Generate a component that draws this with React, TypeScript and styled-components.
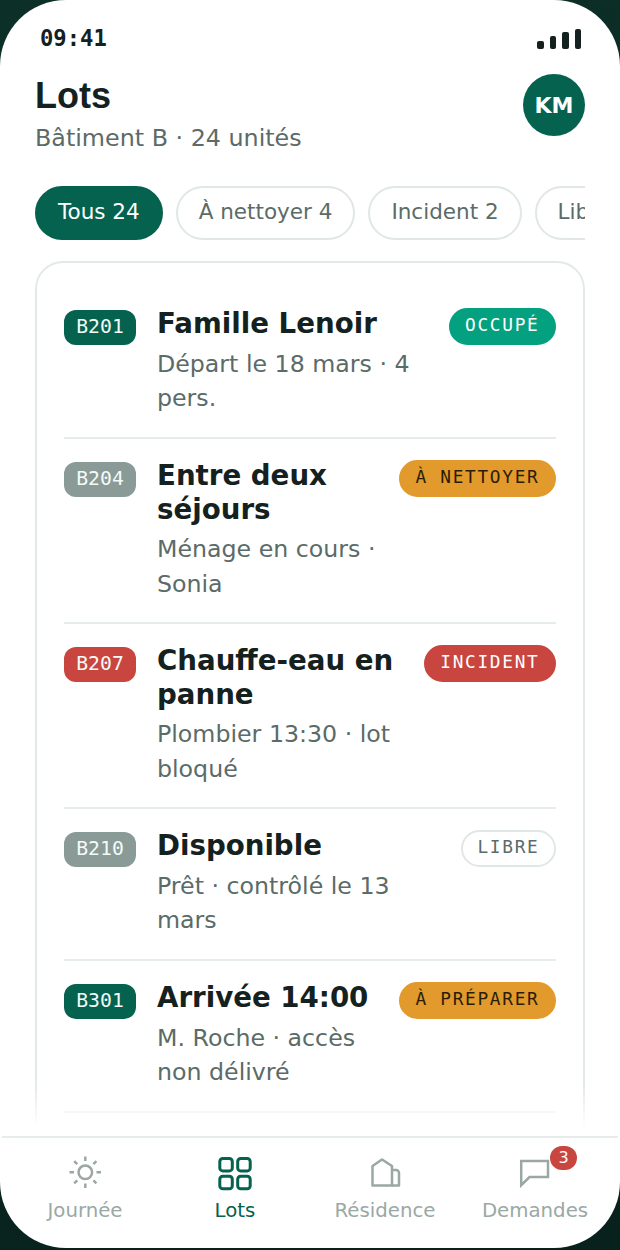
import React from "react";
import styled, { createGlobalStyle } from "styled-components";

const GlobalStyle = createGlobalStyle`
    html, body {
        margin: 0;
        padding: 0;
        background: #0a2620;
    }
`;

const sans = `"DejaVu Sans", sans-serif`;
const mono = `"DejaVu Sans Mono", monospace`;

const Backdrop = styled.div`
    width: 620px;
    height: 1250px;
    background: linear-gradient(160deg, #0c3028, #08211c);
    overflow: hidden;
`;

const Phone = styled.div`
    width: 620px;
    height: 1248px;
    background: #fff;
    border-radius: 66px;
    overflow: hidden;
    display: flex;
    flex-direction: column;
    font-family: ${sans};
`;

const StatusBar = styled.div`
    height: 74px;
    flex: none;
    box-sizing: border-box;
    padding: 23px 39px 0 40px;
    display: flex;
    justify-content: space-between;
    align-items: flex-start;
`;

const Time = styled.span`
    font-family: ${mono};
    font-weight: 700;
    font-size: 22.2px;
    line-height: 30px;
    color: #14211e;
`;

const Signal = styled.div`
    display: flex;
    align-items: flex-end;
    gap: 6px;
    height: 20px;
    margin-top: 6px;
`;

const SignalBar = styled.i<{ $h: number }>`
    display: block;
    width: 6.5px;
    height: ${(p) => p.$h}px;
    border-radius: 2px;
    background: #14211e;
`;

const Header = styled.header`
    flex: none;
    display: flex;
    justify-content: space-between;
    align-items: flex-start;
    padding: 0 35px;
`;

const Title = styled.h1`
    margin: 1px 0 0;
    font-family: "Liberation Sans", Arial, sans-serif;
    font-weight: 700;
    font-size: 36px;
    line-height: 42px;
    color: #14211e;
`;

const Subtitle = styled.div`
    margin-top: 3px;
    font-size: 23.8px;
    line-height: 36px;
    color: #5b6b67;
`;

const Avatar = styled.div`
    width: 62px;
    height: 62px;
    border-radius: 50%;
    background: #04624f;
    color: #fff;
    font-weight: 700;
    font-size: 22px;
    display: flex;
    align-items: center;
    justify-content: center;
`;

const Chips = styled.div`
    flex: none;
    display: flex;
    gap: 13px;
    margin: 30px 35px 0;
    overflow: hidden;
`;

const Chip = styled.div<{ $active?: boolean }>`
    flex: none;
    box-sizing: border-box;
    height: 54px;
    padding: 0 21px 3px;
    display: flex;
    align-items: center;
    border-radius: 27px;
    font-size: 21.5px;
    border: 2px solid ${(p) => (p.$active ? "#04624f" : "#e0e7e5")};
    background: ${(p) => (p.$active ? "#04624f" : "#fff")};
    color: ${(p) => (p.$active ? "#fff" : "#5b6b67")};
`;

const Scroll = styled.div`
    position: relative;
    flex: 1;
    min-height: 0;
    overflow: hidden;
    padding: 21px 35px 0;
`;

const Fade = styled.div`
    position: absolute;
    left: 0;
    right: 0;
    bottom: 0;
    height: 52px;
    background: linear-gradient(to bottom, rgba(255, 255, 255, 0), #fff 85%);
`;

const Card = styled.div`
    border: 2px solid #e3e9e7;
    border-radius: 28px;
    padding: 24.4px 27px 60px;
`;

const Row = styled.div`
    display: flex;
    align-items: flex-start;
    gap: 21px;
    padding: 20px 0 21px;
    border-bottom: 2px solid #e6ecea;
`;

const codeColors = {
    green: "#04624f",
    grey: "#8a9a96",
    red: "#c9453f",
};

const Code = styled.div<{ $tone: keyof typeof codeColors }>`
    flex: none;
    box-sizing: border-box;
    width: 72px;
    height: 35px;
    margin-top: 3px;
    padding-bottom: 2px;
    border-radius: 12px;
    background: ${(p) => codeColors[p.$tone]};
    color: #f2fbf8;
    font-family: ${mono};
    font-size: 19.76px;
    display: flex;
    align-items: center;
    justify-content: center;
`;

const Body = styled.div`
    flex: 1;
    min-width: 0;
`;

const RowTitle = styled.div`
    font-weight: 700;
    font-size: 27.66px;
    line-height: 33.6px;
    color: #14211e;
`;

const RowSub = styled.div`
    margin-top: 6px;
    font-size: 23.7px;
    line-height: 34.5px;
    color: #5b6b67;
`;

const pillTones = {
    occupied: { bg: "#04a181", fg: "#fff", border: "#04a181" },
    clean: { bg: "#e29a2d", fg: "#2b1d05", border: "#e29a2d" },
    incident: { bg: "#c9453f", fg: "#fff", border: "#c9453f" },
    free: { bg: "#fff", fg: "#5b6b67", border: "#e0e7e5" },
};

const Pill = styled.div<{ $tone: keyof typeof pillTones }>`
    flex: none;
    box-sizing: border-box;
    height: 37px;
    margin-top: 1px;
    padding: 0 14.5px 4px;
    border-radius: 19px;
    font-family: ${mono};
    font-size: 17.8px;
    letter-spacing: 1.7px;
    display: flex;
    align-items: center;
    background: ${(p) => pillTones[p.$tone].bg};
    color: ${(p) => pillTones[p.$tone].fg};
    border: 2px solid ${(p) => pillTones[p.$tone].border};
`;

const Nav = styled.nav`
    flex: none;
    box-sizing: border-box;
    height: 112px;
    margin: 0 2px;
    padding: 0 8px;
    border-top: 2px solid #e6ecea;
    display: grid;
    grid-template-columns: repeat(4, 1fr);
`;

const NavItem = styled.div<{ $active?: boolean }>`
    display: flex;
    flex-direction: column;
    align-items: center;
    padding-top: 17px;
    font-size: 19.76px;
    line-height: 28px;
    color: ${(p) => (p.$active ? "#04624f" : "#9aa8a4")};
`;

const IconWrap = styled.div`
    position: relative;
    width: 36px;
    height: 36px;
    margin-bottom: 6px;
`;

const NavIcon = styled.svg<{ $stroke?: number; $miter?: boolean }>`
    display: block;
    width: 36px;
    height: 36px;
    fill: none;
    stroke: currentColor;
    stroke-width: ${(p) => p.$stroke ?? 2.5};
    stroke-linejoin: ${(p) => (p.$miter ? "miter" : "round")};
`;

const Badge = styled.span`
    position: absolute;
    top: -9px;
    right: -24px;
    width: 27px;
    height: 24px;
    border-radius: 12px;
    background: #c9453f;
    color: #fff;
    font-size: 16px;
    line-height: 24px;
    text-align: center;
`;

type Lot = {
    code: string;
    tone: keyof typeof codeColors;
    title: string;
    sub: string;
    pill: string;
    pillTone: keyof typeof pillTones;
};

const lots: Lot[] = [
    { code: "B201", tone: "green", title: "Famille Lenoir", sub: "Départ le 18 mars · 4 pers.", pill: "OCCUPÉ", pillTone: "occupied" },
    { code: "B204", tone: "grey", title: "Entre deux séjours", sub: "Ménage en cours · Sonia", pill: "À NETTOYER", pillTone: "clean" },
    { code: "B207", tone: "red", title: "Chauffe-eau en panne", sub: "Plombier 13:30 · lot bloqué", pill: "INCIDENT", pillTone: "incident" },
    { code: "B210", tone: "grey", title: "Disponible", sub: "Prêt · contrôlé le 13 mars", pill: "LIBRE", pillTone: "free" },
    { code: "B301", tone: "green", title: "Arrivée 14:00", sub: "M. Roche · accès non délivré", pill: "À PRÉPARER", pillTone: "clean" },
];

const App = () => {
    return (
        <Backdrop>
            <GlobalStyle />
            <Phone>
                <StatusBar>
                    <Time>09:41</Time>
                    <Signal>
                        <SignalBar $h={8} />
                        <SignalBar $h={13} />
                        <SignalBar $h={17} />
                        <SignalBar $h={20} />
                    </Signal>
                </StatusBar>
                <Header>
                    <div>
                        <Title>Lots</Title>
                        <Subtitle>Bâtiment B · 24 unités</Subtitle>
                    </div>
                    <Avatar>KM</Avatar>
                </Header>
                <Chips>
                    <Chip $active>Tous 24</Chip>
                    <Chip>À nettoyer 4</Chip>
                    <Chip>Incident 2</Chip>
                    <Chip>Libre 6</Chip>
                </Chips>
                <Scroll>
                    <Card>
                        {lots.map((lot) => (
                            <Row key={lot.code}>
                                <Code $tone={lot.tone}>{lot.code}</Code>
                                <Body>
                                    <RowTitle>{lot.title}</RowTitle>
                                    <RowSub>{lot.sub}</RowSub>
                                </Body>
                                <Pill $tone={lot.pillTone}>{lot.pill}</Pill>
                            </Row>
                        ))}
                    </Card>
                    <Fade />
                </Scroll>
                <Nav>
                    <NavItem>
                        <IconWrap>
                            <NavIcon viewBox="0 0 36 36">
                                <circle cx="18.3" cy="17.3" r="6.8" />
                                <path d="M18.3 1.5v4.5M18.3 28.5v4.5M2.5 17.3h4.5M29.5 17.3h4.5M7.2 6.2l3 3M26.4 25.4l3 3M7.2 28.4l3-3M26.4 9.2l3-3" />
                            </NavIcon>
                        </IconWrap>
                        Journée
                    </NavItem>
                    <NavItem $active>
                        <IconWrap>
                            <NavIcon viewBox="0 0 36 36" $stroke={3}>
                                <rect x="2.8" y="3.4" width="12.5" height="12.5" rx="3" />
                                <rect x="20.7" y="3.4" width="12.5" height="12.5" rx="3" />
                                <rect x="2.8" y="21.3" width="12.5" height="12.5" rx="3" />
                                <rect x="20.7" y="21.3" width="12.5" height="12.5" rx="3" />
                            </NavIcon>
                        </IconWrap>
                        Lots
                    </NavItem>
                    <NavItem>
                        <IconWrap>
                            <NavIcon viewBox="0 0 36 36">
                                <path d="M5.5 30.5V11L15 4.5 25 11V30.5Z" />
                                <path d="M25 15h4a3 3 0 0 1 3 3V30.5H25" />
                            </NavIcon>
                        </IconWrap>
                        Résidence
                    </NavItem>
                    <NavItem>
                        <IconWrap>
                            <NavIcon viewBox="0 0 36 36" $miter>
                                <path d="M4.2 6H31V22H12.5L4.2 30.2Z" />
                            </NavIcon>
                            <Badge>3</Badge>
                        </IconWrap>
                        Demandes
                    </NavItem>
                </Nav>
            </Phone>
        </Backdrop>
    );
};

export default App;
